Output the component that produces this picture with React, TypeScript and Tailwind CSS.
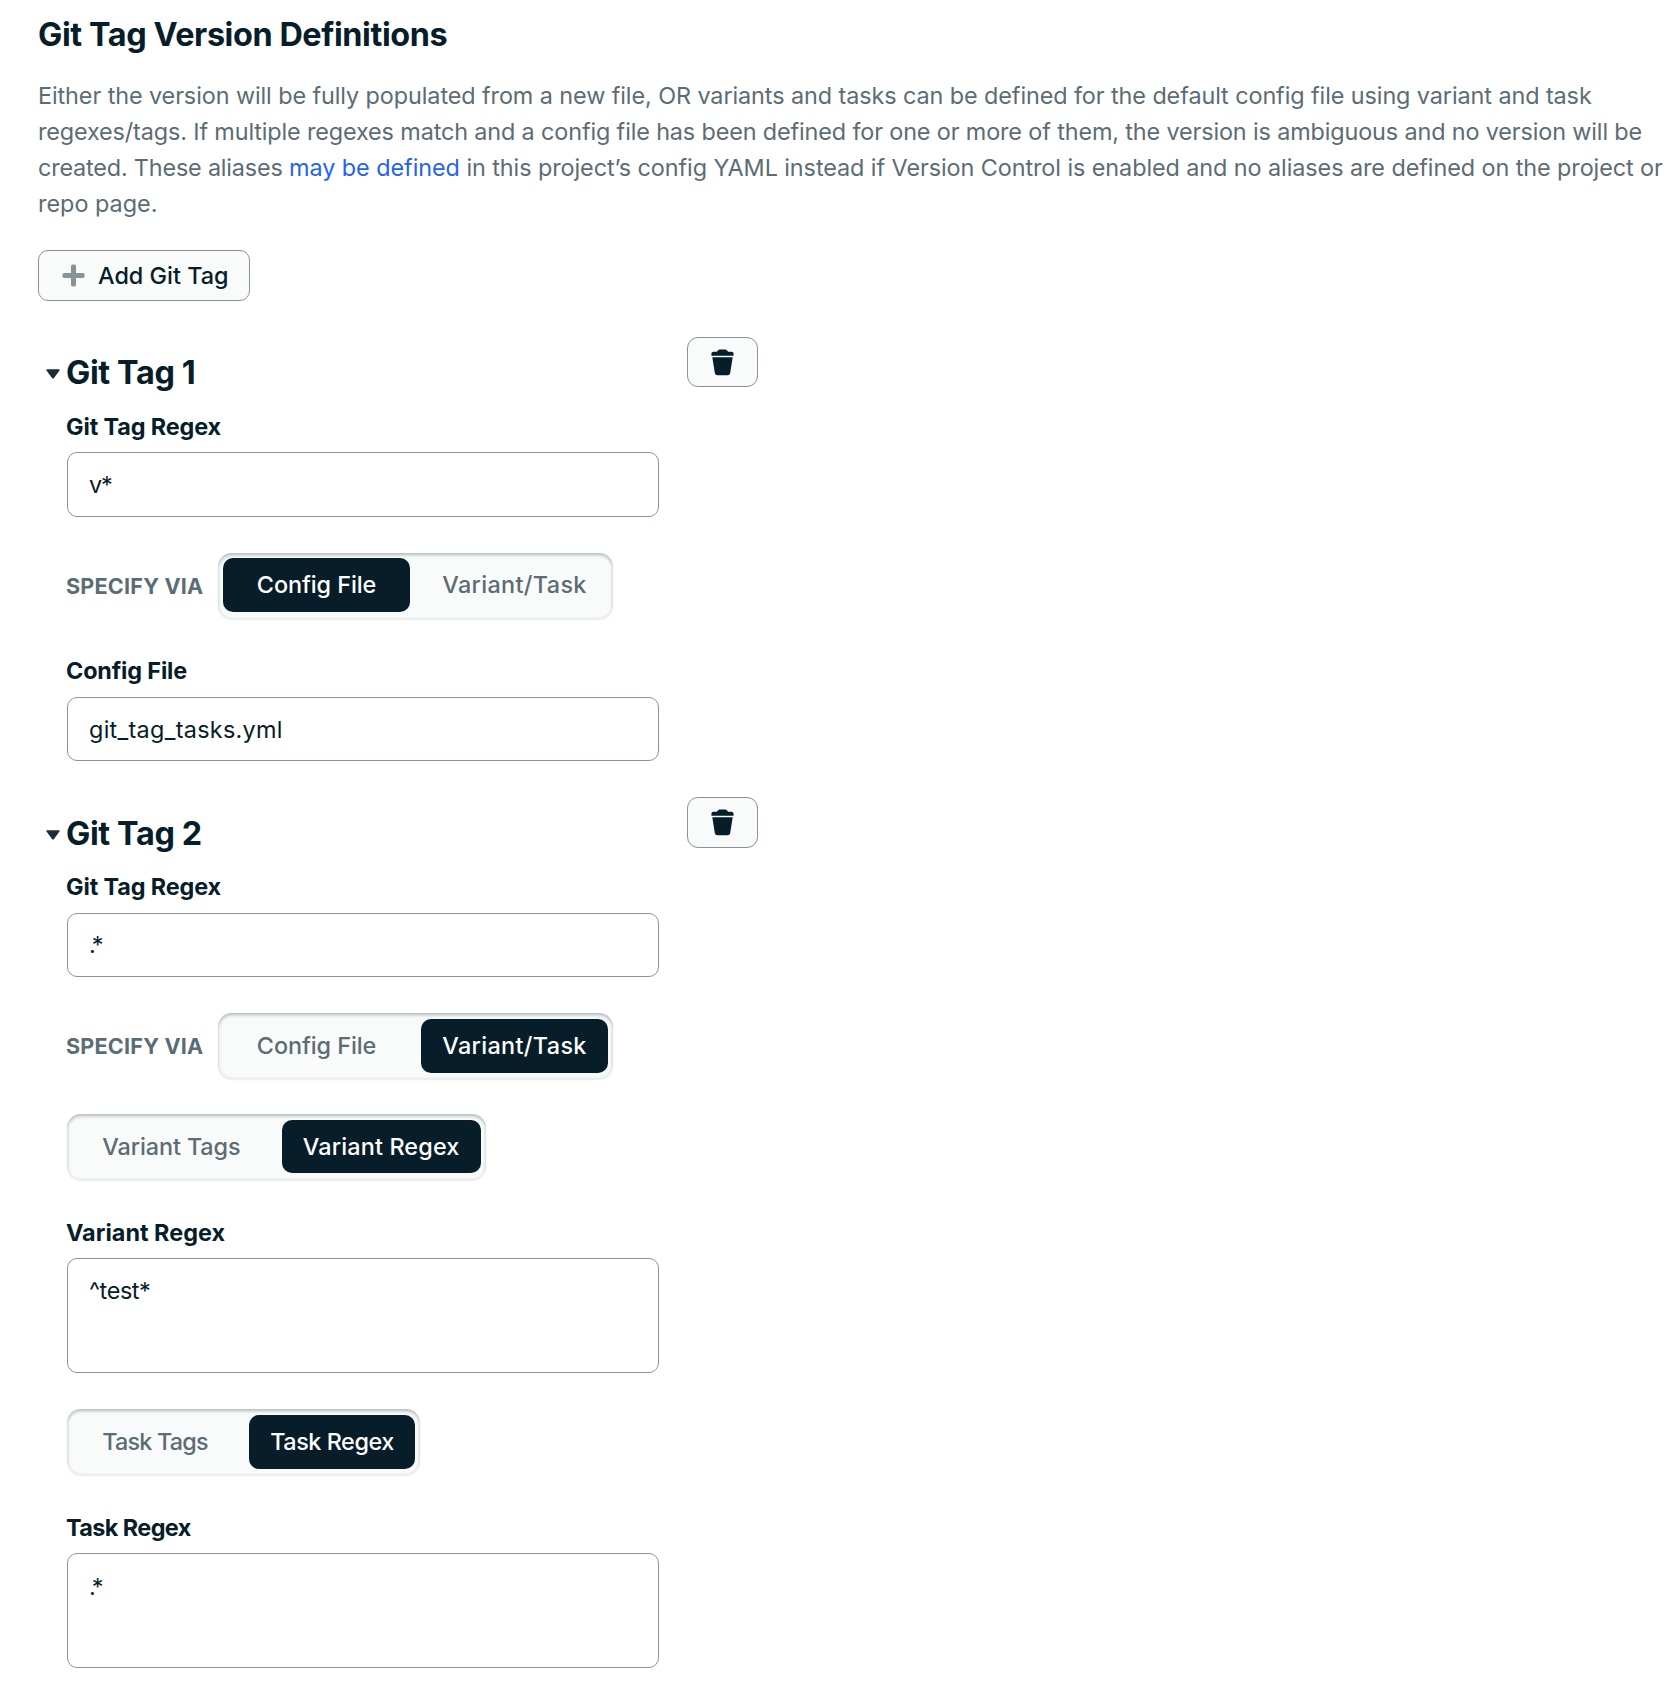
import React from "react";

function PlusIcon() {
  return (
    <svg className="h-[23px] w-[23px] shrink-0" viewBox="0 0 23 23" fill="#889397">
      <path d="M9 2.2A1.8 1.8 0 0 1 10.8.4h1.4A1.8 1.8 0 0 1 14 2.2V9h6.8a1.8 1.8 0 0 1 1.8 1.8v1.4a1.8 1.8 0 0 1-1.8 1.8H14v6.8a1.8 1.8 0 0 1-1.8 1.8h-1.4A1.8 1.8 0 0 1 9 20.8V14H2.2a1.8 1.8 0 0 1-1.8-1.8v-1.4A1.8 1.8 0 0 1 2.2 9H9z" />
    </svg>
  );
}

function TrashIcon() {
  return (
    <svg className="h-[27px] w-[23px]" viewBox="0 0 23 27" fill="#071d29">
      <path d="M5.8 2.8 7.2 1.2Q7.8.6 8.7.6h5.6q.9 0 1.5.6l1.4 1.6h3.2q2.2 0 2.2 2v1.4q0 .5-.5.5H.9q-.5 0-.5-.5V4.8q0-2 2.2-2z" />
      <path d="M1.3 8.3h20.4l-2.5 15.7a2.6 2.6 0 0 1-2.6 2.2H6.4A2.6 2.6 0 0 1 3.8 24z" />
    </svg>
  );
}

function DeleteButton({ className }: { className: string }) {
  return (
    <button
      className={
        "flex w-[71px] shrink-0 items-center justify-center rounded-[11px] border border-[#889397] bg-[#f9fbfa] " +
        className
      }
    >
      <TrashIcon />
    </button>
  );
}

function Heading({ text, className }: { text: string; className: string }) {
  return (
    <div className={"flex h-10 items-center " + className}>
      <svg className="-ml-[21px] mr-[6px] mt-px h-[10px] w-[14px] shrink-0" viewBox="0 0 14 10" fill="#1c2d38">
        <path d="M1 .3h12q1.1.3.5 1.3L8 8.9q-1 1-2 0L.5 1.6Q-.1.6 1 .3z" />
      </svg>
      <h3 className="whitespace-nowrap text-[32.4px] font-bold leading-10 tracking-[-0.38px]">{text}</h3>
    </div>
  );
}

function Label({ text, className }: { text: string; className: string }) {
  return (
    <label className={"-ml-px block h-9 whitespace-nowrap text-[23.4px] font-bold leading-9 " + className}>
      {text}
    </label>
  );
}

function Field({ value, className }: { value: string; className: string }) {
  return (
    <div
      className={
        "flex w-[592px] items-start rounded-[10px] border border-[#889397] bg-white px-[21px] text-[23.4px] leading-9 " +
        className
      }
    >
      {value}
    </div>
  );
}

type Option = { text: string; tracking: string };

function Segmented({
  options,
  active,
  className,
}: {
  options: Option[];
  active: number;
  className: string;
}) {
  return (
    <div
      className={
        "grid grid-cols-2 gap-[11px] rounded-[14px] bg-[#f9fbfa] px-[5px] shadow-[inset_0_2px_3.6px_rgba(0,30,43,0.3),0_1.8px_1.8px_#e8edeb] " +
        className
      }
    >
      {options.map((o, i) => (
        <div
          key={o.text}
          className={
            "flex items-center justify-center whitespace-nowrap rounded-[10px] text-[23.4px] font-medium leading-9 " +
            o.tracking +
            (i === active ? " bg-[#071d29] text-white" : " text-[#5c6c75]")
          }
        >
          {o.text}
        </div>
      ))}
    </div>
  );
}

function SpecifyVia({ active, className }: { active: number; className: string }) {
  return (
    <div className="mt-9 flex items-center">
      <span className="-ml-px w-[152px] whitespace-nowrap text-[21.6px] font-bold leading-9 tracking-[0.2px] text-[#5c6c75]">
        SPECIFY VIA
      </span>
      <Segmented
        className={"h-[65px] w-[395px] " + className}
        active={active}
        options={[
          { text: "Config File", tracking: "tracking-[-0.08px]" },
          { text: "Variant/Task", tracking: "tracking-[0.35px]" },
        ]}
      />
    </div>
  );
}

export default function App() {
  return (
    <main className="h-[1690px] w-[1680px] overflow-hidden bg-white pl-[38px] pt-[13px] font-['Inter',sans-serif] text-[#071d29]">
      <h2 className="h-11 whitespace-nowrap text-[32.4px] font-bold leading-[44px] tracking-[-0.42px]">
        Git Tag Version Definitions
      </h2>
      <p className="mt-[21px] whitespace-nowrap text-[23.4px] leading-9 text-[#5c6c75]">
        <span className="block tracking-[-0.085px]">
          Either the version will be fully populated from a new file, OR variants and tasks can be defined for the
          default config file using variant and task
        </span>
        <span className="block tracking-[-0.132px]">
          regexes/tags. If multiple regexes match and a config file has been defined for one or more of them, the
          version is ambiguous and no version will be
        </span>
        <span className="block">
          <span className="tracking-[-0.18px]">created. These aliases </span>
          <a className="tracking-[-0.05px] text-[#2563eb]">may be defined</a>
          <span className="tracking-[-0.075px]">
            {" "}
            in this project’s config YAML instead if Version Control is enabled and no aliases are defined on the
            project or
          </span>
        </span>
        <span className="block">repo page.</span>
      </p>

      <button className="mt-7 flex h-[51px] w-[212px] items-center rounded-[10px] border border-[#889397] bg-[#f9fbfa] pl-[23px] text-[23.4px] font-medium leading-9">
        <PlusIcon />
        <span className="ml-[13px] whitespace-nowrap">Add Git Tag</span>
      </button>

      <section className="mt-9 flex h-[460px] items-start pl-[29px]">
        <div className="w-[620px]">
          <Heading text="Git Tag 1" className="mt-4" />
          <Label text="Git Tag Regex" className="mt-4 tracking-[-0.12px]" />
          <Field value="v*" className="mt-[7px] h-[65px] pt-[14px] tracking-[-1.2px]" />
          <SpecifyVia active={0} className="pb-[6px] pt-[5px]" />
          <Label text="Config File" className="mt-[35px] tracking-[-0.15px]" />
          <Field value="git_tag_tasks.yml" className="mt-2 h-[64px] pt-[14px] tracking-[0.3px]" />
        </div>
        <DeleteButton className="h-[50px]" />
      </section>

      <section className="flex items-start pl-[29px]">
        <div className="w-[620px]">
          <Heading text="Git Tag 2" className="mt-[17px]" />
          <Label text="Git Tag Regex" className="mt-[15px] tracking-[-0.12px]" />
          <Field value=".*" className="mt-2 h-[64px] pt-[13px] tracking-[-4px]" />
          <SpecifyVia active={1} className="pb-[5px] pt-[6px]" />
          <Segmented
            className="mt-9 h-[65px] w-[418.5px] pb-[6px] pt-[6px]"
            active={1}
            options={[
              { text: "Variant Tags", tracking: "tracking-[-0.1px]" },
              { text: "Variant Regex", tracking: "tracking-[0.15px]" },
            ]}
          />
          <Label text="Variant Regex" className="mt-9 tracking-[0.02px]" />
          <Field value="^test*" className="mt-[7px] h-[115px] pt-[14px] tracking-[-0.4px]" />
          <Segmented
            className="mt-9 h-[65px] w-[353px] pb-[5px] pt-[6px]"
            active={1}
            options={[
              { text: "Task Tags", tracking: "tracking-[-0.8px]" },
              { text: "Task Regex", tracking: "tracking-[-0.45px]" },
            ]}
          />
          <Label text="Task Regex" className="mt-9 tracking-[-0.58px]" />
          <Field value=".*" className="mt-[7px] h-[115px] pt-[15px] tracking-[-4px]" />
        </div>
        <DeleteButton className="h-[51px]" />
      </section>
    </main>
  );
}
